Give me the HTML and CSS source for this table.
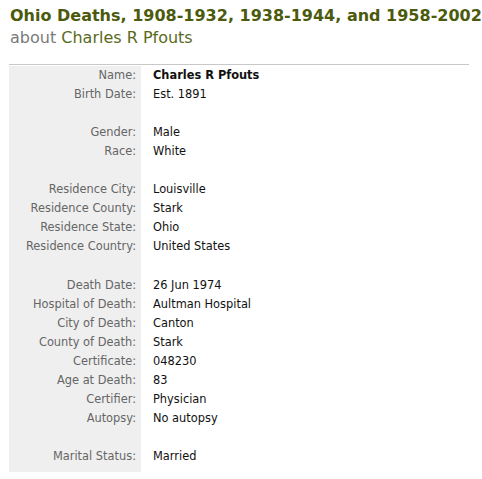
FILE: index.html
```html
<!DOCTYPE html>
<html>
<head>
<meta charset="utf-8">
<link rel="stylesheet" href="styles.css">
</head>
<body>
<div class="page">
  <h1 class="title">Ohio Deaths, 1908-1932, 1938-1944, and 1958-2002</h1>
  <h2 class="subtitle"><span class="about">about</span> <span class="person">Charles R Pfouts</span></h2>
  <div class="record">
    <div class="row"><div class="label">Name:</div><div class="value strong">Charles R Pfouts</div></div>
    <div class="row"><div class="label">Birth Date:</div><div class="value">Est. 1891</div></div>
    <div class="row"><div class="label"></div><div class="value"></div></div>
    <div class="row"><div class="label">Gender:</div><div class="value">Male</div></div>
    <div class="row"><div class="label">Race:</div><div class="value">White</div></div>
    <div class="row"><div class="label"></div><div class="value"></div></div>
    <div class="row"><div class="label">Residence City:</div><div class="value">Louisville</div></div>
    <div class="row"><div class="label">Residence County:</div><div class="value">Stark</div></div>
    <div class="row"><div class="label">Residence State:</div><div class="value">Ohio</div></div>
    <div class="row"><div class="label">Residence Country:</div><div class="value">United States</div></div>
    <div class="row"><div class="label"></div><div class="value"></div></div>
    <div class="row"><div class="label">Death Date:</div><div class="value">26 Jun 1974</div></div>
    <div class="row"><div class="label">Hospital of Death:</div><div class="value">Aultman Hospital</div></div>
    <div class="row"><div class="label">City of Death:</div><div class="value">Canton</div></div>
    <div class="row"><div class="label">County of Death:</div><div class="value">Stark</div></div>
    <div class="row"><div class="label">Certificate:</div><div class="value">048230</div></div>
    <div class="row"><div class="label">Age at Death:</div><div class="value">83</div></div>
    <div class="row"><div class="label">Certifier:</div><div class="value">Physician</div></div>
    <div class="row"><div class="label">Autopsy:</div><div class="value">No autopsy</div></div>
    <div class="row"><div class="label"></div><div class="value"></div></div>
    <div class="row"><div class="label">Marital Status:</div><div class="value">Married</div></div>
    <div class="row last"><div class="label"></div><div class="value"></div></div>
  </div>
</div>
</body>
</html>
```
FILE: styles.css
```css
html, body {
  margin: 0;
  padding: 0;
  background: #ffffff;
}
.page {
  padding: 5px 0 0 10px;
  width: 460px;
}
.title {
  margin: 0;
  font-family: "DejaVu Sans", Verdana, sans-serif;
  font-weight: bold;
  font-size: 16px;
  line-height: 22px;
  color: #4b5a0c;
  white-space: nowrap;
}
.subtitle {
  margin: 0;
  font-family: "DejaVu Sans", Verdana, sans-serif;
  font-weight: normal;
  font-size: 16px;
  line-height: 22px;
  white-space: nowrap;
}
.about {
  color: #7a7a7a;
}
.person {
  color: #5a6a1c;
}
.record {
  margin: 15px 0 0 -1px;
  padding-top: 1px;
  border-top: 1px solid #c8c8c8;
  width: 460px;
  font-family: "DejaVu Sans", Verdana, sans-serif;
  font-size: 11.4px;
}
.row {
  display: flex;
  height: 19.05px;
  line-height: 19px;
}
.row:first-child {
  margin-top: -1px;
  padding-top: 1px;
}
.row.last {
  height: 6px;
}
.label {
  width: 127px;
  padding-right: 5px;
  flex: none;
  text-align: right;
  background: #efefef;
  color: #666666;
  white-space: nowrap;
}
.value {
  padding-left: 12px;
  color: #111111;
  white-space: nowrap;
}
.value.strong {
  font-weight: bold;
}
```
